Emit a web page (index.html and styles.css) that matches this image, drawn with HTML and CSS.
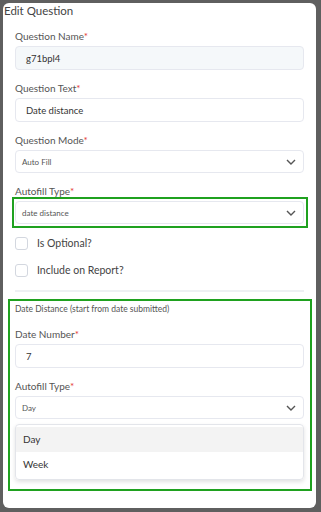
FILE: index.html
```html
<!DOCTYPE html>
<html lang="en">
<head>
    <meta charset="UTF-8">
    <meta name="viewport" content="width=device-width, initial-scale=1.0">
    <title>Edit Question</title>
    <link rel="stylesheet" href="styles.css">
</head>
<body>
    <div class="modal">
        <div class="modal-title">Edit Question</div>
        <div class="modal-body">
            <div class="field">
                <label>Question Name<span class="req">*</span></label>
                <div class="input readonly">g71bpl4</div>
            </div>
            <div class="field">
                <label>Question Text<span class="req">*</span></label>
                <div class="input">Date distance</div>
            </div>
            <div class="field">
                <label>Question Mode<span class="req">*</span></label>
                <div class="select">
                    <span>Auto Fill</span>
                    <svg width="10" height="6" viewBox="0 0 10 6"><path d="M1 1l4 4 4-4" fill="none" stroke="#555" stroke-width="1.4"/></svg>
                </div>
            </div>
            <div class="field">
                <label>Autofill Type<span class="req">*</span></label>
                <div class="highlight">
                    <div class="select">
                        <span>date distance</span>
                        <svg width="10" height="6" viewBox="0 0 10 6"><path d="M1 1l4 4 4-4" fill="none" stroke="#555" stroke-width="1.4"/></svg>
                    </div>
                </div>
            </div>
            <div class="check-row"><span class="box"></span>Is Optional?</div>
            <div class="check-row"><span class="box"></span>Include on Report?</div>
            <hr>
            <div class="section">
                <div class="section-title">Date Distance (start from date submitted)</div>
                <div class="field">
                    <label>Date Number<span class="req">*</span></label>
                    <div class="input">7</div>
                </div>
                <div class="field last">
                    <label>Autofill Type<span class="req">*</span></label>
                    <div class="select">
                        <span>Day</span>
                        <svg width="10" height="6" viewBox="0 0 10 6"><path d="M1 1l4 4 4-4" fill="none" stroke="#555" stroke-width="1.4"/></svg>
                    </div>
                    <ul class="menu">
                        <li class="active">Day</li>
                        <li>Week</li>
                    </ul>
                </div>
            </div>
        </div>
    </div>
</body>
</html>
```

FILE: styles.css
```css
/* Edit question modal */
body {
    font-family: Lato, "Open Sans", sans-serif;
    margin: 0;
    padding: 3px 5px 4px 3px;
    background-color: #5f5f5f;
    color: #333;
}
.modal {
    background-color: #fff;
    border-radius: 6px;
    height: 505px;
    box-sizing: border-box;
}
.modal-title {
    font-size: 11.5px;
    line-height: 16px;
    padding: 0 0 0 1px;
    color: #444;
}
.modal-body {
    padding: 11px 12px 0 12px;
}
.field {
    margin-bottom: 12px;
}
label {
    display: block;
    font-size: 10px;
    line-height: 12px;
    color: #555;
    margin-bottom: 4px;
}
.req {
    color: #e53935;
}
.input, .select {
    height: 24px;
    box-sizing: border-box;
    border: 1px solid #e6e8ef;
    border-radius: 4px;
    background-color: #fff;
    display: flex;
    align-items: center;
}
.input {
    font-size: 9.5px;
    padding-left: 10px;
    color: #333;
}
.input.readonly {
    background-color: #f5f8fa;
}
.select {
    font-size: 8px;
    color: #555;
    padding: 0 7px 0 6px;
    justify-content: space-between;
    height: 23px;
}
.highlight {
    border: 2px solid #1fa11f;
    margin: -4px -4px -4px -3px;
    padding: 2px 2px 2px 1px;
}
.check-row {
    display: flex;
    align-items: center;
    font-size: 10.5px;
    color: #444;
    height: 14px;
    margin-bottom: 13px;
}
.box {
    width: 11px;
    height: 11px;
    border: 1px solid #d3d7df;
    border-radius: 3px;
    margin-right: 9px;
}
hr {
    border: none;
    border-top: 2px solid #eef0f3;
    margin: 0 0 7px;
}
.section {
    border: 2px solid #1fa11f;
    margin: 0 -8px 0 -7px;
    padding: 1px 6px 9px 5px;
}
.section-title {
    font-size: 8.5px;
    line-height: 14px;
    color: #555;
    margin-bottom: 12px;
}
.field.last {
    margin-bottom: 0;
}
.menu {
    list-style: none;
    margin: 5px 0 0;
    padding: 2px 0;
    border: 1px solid #e3e5ea;
    border-radius: 4px;
    box-shadow: 0 2px 4px rgba(0, 0, 0, 0.12);
}
.menu li {
    font-size: 10px;
    height: 25px;
    line-height: 25px;
    padding-left: 7px;
    color: #333;
}
.menu li.active {
    background-color: #f3f3f3;
}
```
